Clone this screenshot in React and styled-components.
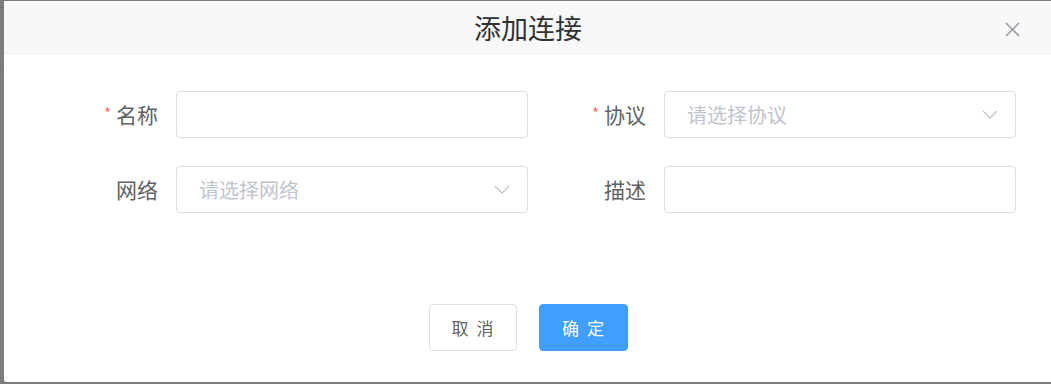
import React from 'react';
import styled, { createGlobalStyle } from 'styled-components';

const GlobalStyle = createGlobalStyle`
  html, body {
    margin: 0;
    padding: 0;
    overflow: hidden;
  }
  body {
    width: 1051px;
    height: 384px;
    background:
      linear-gradient(#6e6e6e, #6e6e6e) 0 7px / 100% 1px no-repeat,
      linear-gradient(#727272, #727272) 0 69px / 100% 1px no-repeat,
      #7d7d7d;
    font-family: "Noto Sans CJK SC", "Noto Sans", sans-serif;
  }
`;

const Overlay = styled.div`
  width: 1051px;
  height: 384px;
  padding: 1px 0 2px 4px;
  box-sizing: border-box;
  display: flex;
`;

const Dialog = styled.div`
  width: 1048px;
  flex-shrink: 0;
  background: #fff;
  border-radius: 2px;
  display: flex;
  flex-direction: column;
`;

const Header = styled.div`
  height: 52px;
  background: #f8f8f8;
  border-bottom: 1px solid #eeeeee;
  display: flex;
  align-items: center;
  justify-content: center;
  position: relative;
`;

const Title = styled.span`
  font-size: 27px;
  color: #303133;
  line-height: 1;
`;

const CloseButton = styled.button`
  position: absolute;
  right: 32px;
  top: 20px;
  width: 16px;
  height: 16px;
  padding: 0;
  border: none;
  background: transparent;
  cursor: pointer;
  display: flex;
  align-items: center;
  justify-content: center;
`;

const Body = styled.div`
  padding: 37px 36px 0 72px;
  display: grid;
  grid-template-columns: 1fr 1fr;
  column-gap: 36px;
  row-gap: 28px;
`;

const Field = styled.div`
  display: flex;
  align-items: center;
`;

const Label = styled.label`
  width: 100px;
  flex-shrink: 0;
  padding-right: 18px;
  box-sizing: border-box;
  text-align: right;
  font-size: 21px;
  color: #606266;
  line-height: 1;
`;

const Star = styled.span`
  color: #f56c6c;
  font-size: 15px;
  margin-right: 5px;
  position: relative;
  top: -4px;
`;

const Control = styled.div`
  flex: 1;
  height: 47px;
  box-sizing: border-box;
  border: 1px solid #dcdfe6;
  border-radius: 4px;
  padding: 0 17px 0 22px;
  display: flex;
  align-items: center;
  justify-content: space-between;
  font-size: 20px;
  color: ${(p) => (p.$placeholder ? '#c0c4cc' : '#606266')};
`;

const Footer = styled.div`
  margin-top: 91px;
  display: flex;
  justify-content: center;
  gap: 22px;
`;

const Button = styled.button`
  width: ${(p) => (p.$primary ? '89px' : '88px')};
  height: 47px;
  box-sizing: border-box;
  border-radius: 4px;
  border: 1px solid ${(p) => (p.$primary ? '#409eff' : '#dcdfe6')};
  background: ${(p) => (p.$primary ? '#409eff' : '#fff')};
  color: ${(p) => (p.$primary ? '#fff' : '#606266')};
  font-family: "Noto Sans CJK SC", sans-serif;
  font-size: 17px;
  letter-spacing: 2px;
  padding: 0 0 0 2px;
  cursor: pointer;
`;

const Chevron = () => (
  <svg width="16" height="9" viewBox="0 0 16 9" fill="none">
    <path d="M1 1l7 7 7-7" stroke="#c0c4cc" strokeWidth="1.3" />
  </svg>
);

const CloseIcon = () => (
  <svg width="15" height="15" viewBox="0 0 15 15" fill="none">
    <path d="M1 1l13 13M14 1L1 14" stroke="#909399" strokeWidth="1.4" />
  </svg>
);

const fields = [
  { label: '名称', required: true },
  { label: '协议', required: true, placeholder: '请选择协议', select: true },
  { label: '网络', placeholder: '请选择网络', select: true },
  { label: '描述' },
];

export default function App() {
  return (
    <>
      <GlobalStyle />
      <Overlay>
        <Dialog>
          <Header>
            <Title>添加连接</Title>
            <CloseButton aria-label="关闭">
              <CloseIcon />
            </CloseButton>
          </Header>
          <Body>
            {fields.map((f) => (
              <Field key={f.label}>
                <Label>
                  {f.required && <Star>*</Star>}
                  {f.label}
                </Label>
                <Control $placeholder={!!f.placeholder}>
                  <span>{f.placeholder || ''}</span>
                  {f.select && <Chevron />}
                </Control>
              </Field>
            ))}
          </Body>
          <Footer>
            <Button>取 消</Button>
            <Button $primary>确 定</Button>
          </Footer>
        </Dialog>
      </Overlay>
    </>
  );
}
